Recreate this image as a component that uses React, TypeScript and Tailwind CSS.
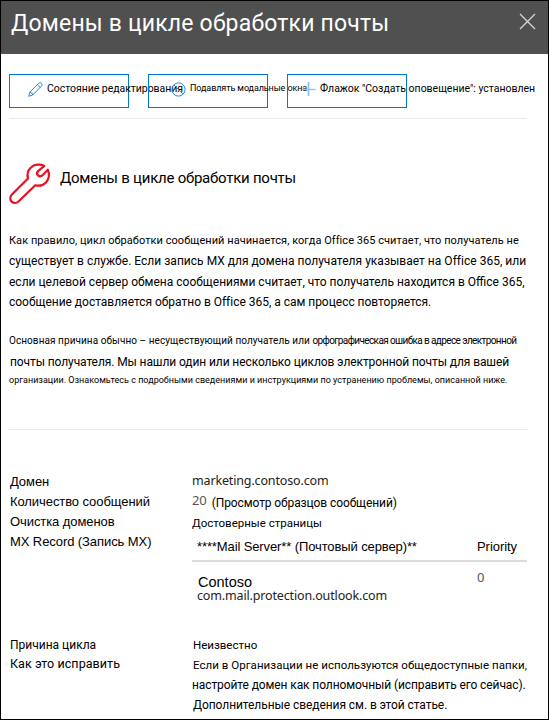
import type { ReactNode } from "react";

function Line({ className, children }: { className: string; children: ReactNode }) {
  return <div className={`whitespace-nowrap ${className}`}>{children}</div>;
}

function Pencil() {
  return (
    <svg className="h-[15px] w-[15px] shrink-0" viewBox="0 0 15 15" fill="none" stroke="#2b88d8" strokeWidth="1">
      <path d="M.7 14.3 1.8 10.2 10.6 1.4c.9-.9 2.2-.9 2.9-.1.8.8.8 2-.1 2.9L4.7 13Z M1.8 10.2C3.5 10.3 4.6 11.4 4.7 13 M9.4 2.6l2.9 2.9" />
    </svg>
  );
}

function Blocked() {
  return (
    <svg className="h-[15px] w-[15px] shrink-0" viewBox="0 0 15 15" fill="none" stroke="#2b88d8" strokeWidth="1">
      <circle cx="7.5" cy="7.5" r="6.6" />
      <path d="m2.900 2.900 9.200 9.200" />
    </svg>
  );
}

function Plus() {
  return (
    <svg className="h-[15px] w-[15px] shrink-0" viewBox="0 0 15 15" fill="none" stroke="#8fc3f0">
      <path d="M7.5 0v14" strokeWidth="1.800" />
      <path d="M1 7.500h13.500" strokeWidth="1.400" />
    </svg>
  );
}

function Wrench() {
  return (
    <svg className="h-[42px] w-[42px] shrink-0" viewBox="0 0 42 42" fill="none" stroke="#e81123" strokeWidth="2.2" strokeLinejoin="round">
      <path d="M35.300 2.900C31 .8 25.300 1.100 21.700 4.700C18.700 7.700 17.900 11.700 19 15.500L2.700 31.800C.8 33.700.8 36.700 2.700 38.600C4.600 40.500 7.500 40.500 9.500 38.500L26.300 22.200C30 23.200 34.200 22.300 37 19.400C40.200 16 40.800 10.700 38.800 6.700L33.500 12.200C32 13.700 30.300 13.700 29 12.400C27.700 11.100 27.700 9.500 29.100 8.100Z" />
    </svg>
  );
}

export default function App() {
  return (
    <div className="h-[720px] w-[549px] overflow-hidden border border-black bg-white font-[Roboto,'Liberation_Sans',sans-serif] text-black">
      <header className="flex h-[53px] justify-between bg-[#505050] pl-[10px] pr-[12px] text-white">
        <h1 className="whitespace-nowrap pt-[3px] text-[23px] leading-[40px] tracking-[0.18px]">Домены в цикле обработки почты</h1>
        <svg className="mt-[12px] h-[17px] w-[17px]" viewBox="0 0 17 17" stroke="#d8d8d8" strokeWidth="1.3">
          <path d="m1 1 15 15M16 1 1 16" />
        </svg>
      </header>

      <main className="pl-[8px] pr-[21px]">
        <div className="flex h-[65px] gap-[19px] border-b border-[#eaeaea] pt-[20px]">
          <button className="flex h-[34px] w-[120px] shrink-0 items-start border border-[#0078d4] pl-[18px] pt-[7px]">
            <Pencil />
            <span className="ml-[4px] whitespace-nowrap text-[10.5px] leading-[14px] tracking-[-0.04px]">Состояние редактирования</span>
          </button>
          <button className="flex h-[34px] w-[120px] shrink-0 items-start border border-[#0078d4] pl-[22px] pt-[7px]">
            <Blocked />
            <span className="ml-[4px] whitespace-nowrap text-[9px] leading-[13px] tracking-[-0.1px]">Подавлять модальные окна</span>
          </button>
          <button className="flex h-[34px] w-[120px] shrink-0 items-start border border-[#0078d4] pl-[13px] pt-[7px]">
            <Plus />
            <span className="ml-[4px] whitespace-nowrap text-[10.5px] leading-[14px] tracking-[-0.02px]">Флажок "Создать оповещение": установлен</span>
          </button>
        </div>

        <div className="flex pt-[44px]">
          <Wrench />
          <h2 className="ml-[9px] whitespace-nowrap pt-[5px] text-[15px] leading-[20px] tracking-[-0.24px]">Домены в цикле обработки почты</h2>
        </div>

        <div className="pt-[25px]">
          <Line className="h-[21px] text-[11px] leading-[22px] tracking-[0.05px]">Как правило, цикл обработки сообщений начинается, когда Office 365 считает, что получатель не</Line>
          <Line className="h-[21px] text-[12px] leading-[20px] tracking-[0.02px]">существует в службе. Если запись MX для домена получателя указывает на Office 365, или</Line>
          <Line className="h-[20px] text-[12px] leading-[20px]">если целевой сервер обмена сообщениями считает, что получатель находится в Office 365,</Line>
          <Line className="h-[20px] text-[12px] leading-[20px] tracking-[-0.02px]">сообщение доставляется обратно в Office 365, а сам процесс повторяется.</Line>
        </div>

        <div className="h-[118px] border-b border-[#eaeaea] pt-[18px]">
          <Line className="h-[22px] text-[10px] leading-[22px] tracking-[0.07px]">
            Основная причина обычно – несуществующий получатель или{" "}
            <span className="tracking-[-0.61px]">орфографическая ошибка в адресе электронной</span>
          </Line>
          <Line className="h-[18px] pl-px text-[12px] leading-[20px] tracking-[-0.1px]">почты получателя. Мы нашли один или несколько циклов электронной почты для вашей</Line>
          <Line className="h-[20px] text-[9px] leading-[20px] tracking-[0.02px]">организации. Ознакомьтесь с подробными сведениями и инструкциями по устранению проблемы, описанной ниже.</Line>
        </div>

        <section className="flex h-[205px] pt-[42px]">
          <div className="w-[183px] shrink-0 pl-px font-['Liberation_Sans'] text-[13px] leading-[20px] tracking-[-0.08px]">
            <Line className="h-[20px]">Домен</Line>
            <Line className="h-[20px]">Количество сообщений</Line>
            <Line className="h-[20px]">Очистка доменов</Line>
            <Line className="h-[20px]">MX Record (Запись MX)</Line>
          </div>
          <div className="w-[335px] shrink-0">
            <Line className="h-[20px] font-['Noto_Sans'] text-[12.5px] leading-[18px] tracking-[-0.15px] text-[#222]">marketing.contoso.com</Line>
            <div className="flex h-[21px] gap-[5px]">
              <span className="font-['Noto_Sans'] text-[13px] leading-[17px] tracking-[-0.1px] text-[#555]">20</span>
              <Line className="text-[12px] leading-[22px] tracking-[-0.1px]">(Просмотр образцов сообщений)</Line>
            </div>
            <Line className="h-[20px] text-[11.5px] leading-[21px]">Достоверные страницы</Line>
            <div className="flex h-[29px] border-b-2 border-[#dcdcdc] pl-[5px] font-['Liberation_Sans'] text-[13px] leading-[27px]">
              <Line className="w-[280px] tracking-[-0.11px]">****Mail Server** (Почтовый сервер)**</Line>
              <Line className="tracking-[-0.05px]">Priority</Line>
            </div>
            <div className="flex pl-[5px] pt-[10px]">
              <div className="w-[280px]">
                <Line className="h-[15px] pl-px font-['Liberation_Sans'] text-[14.5px] leading-[20px]">Contoso</Line>
                <Line className="h-[18px] font-['Noto_Sans'] text-[12.5px] leading-[18px] tracking-[-0.15px] text-[#222]">com.mail.protection.outlook.com</Line>
              </div>
              <span className="font-['Noto_Sans'] text-[13px] leading-[10px] text-[#555]">0</span>
            </div>
          </div>
        </section>

        <section className="flex">
          <div className="w-[184px] shrink-0 pl-px">
            <Line className="h-[19px] text-[12px] leading-[20px]">Причина цикла</Line>
            <Line className="h-[20px] text-[12.5px] leading-[20px] tracking-[0.07px]">Как это исправить</Line>
          </div>
          <div className="shrink-0">
            <Line className="h-[20px] text-[11.5px] leading-[20px]">Неизвестно</Line>
            <Line className="h-[20px] text-[11.5px] leading-[20px] tracking-[0.04px]">Если в Организации не используются общедоступные папки,</Line>
            <Line className="-ml-px h-[20px] text-[12px] leading-[20px] tracking-[-0.1px]">настройте домен как полномочный (исправить его сейчас).</Line>
            <Line className="h-[20px] text-[12px] leading-[20px] tracking-[-0.07px]">Дополнительные сведения см. в этой статье.</Line>
          </div>
        </section>
      </main>
    </div>
  );
}
